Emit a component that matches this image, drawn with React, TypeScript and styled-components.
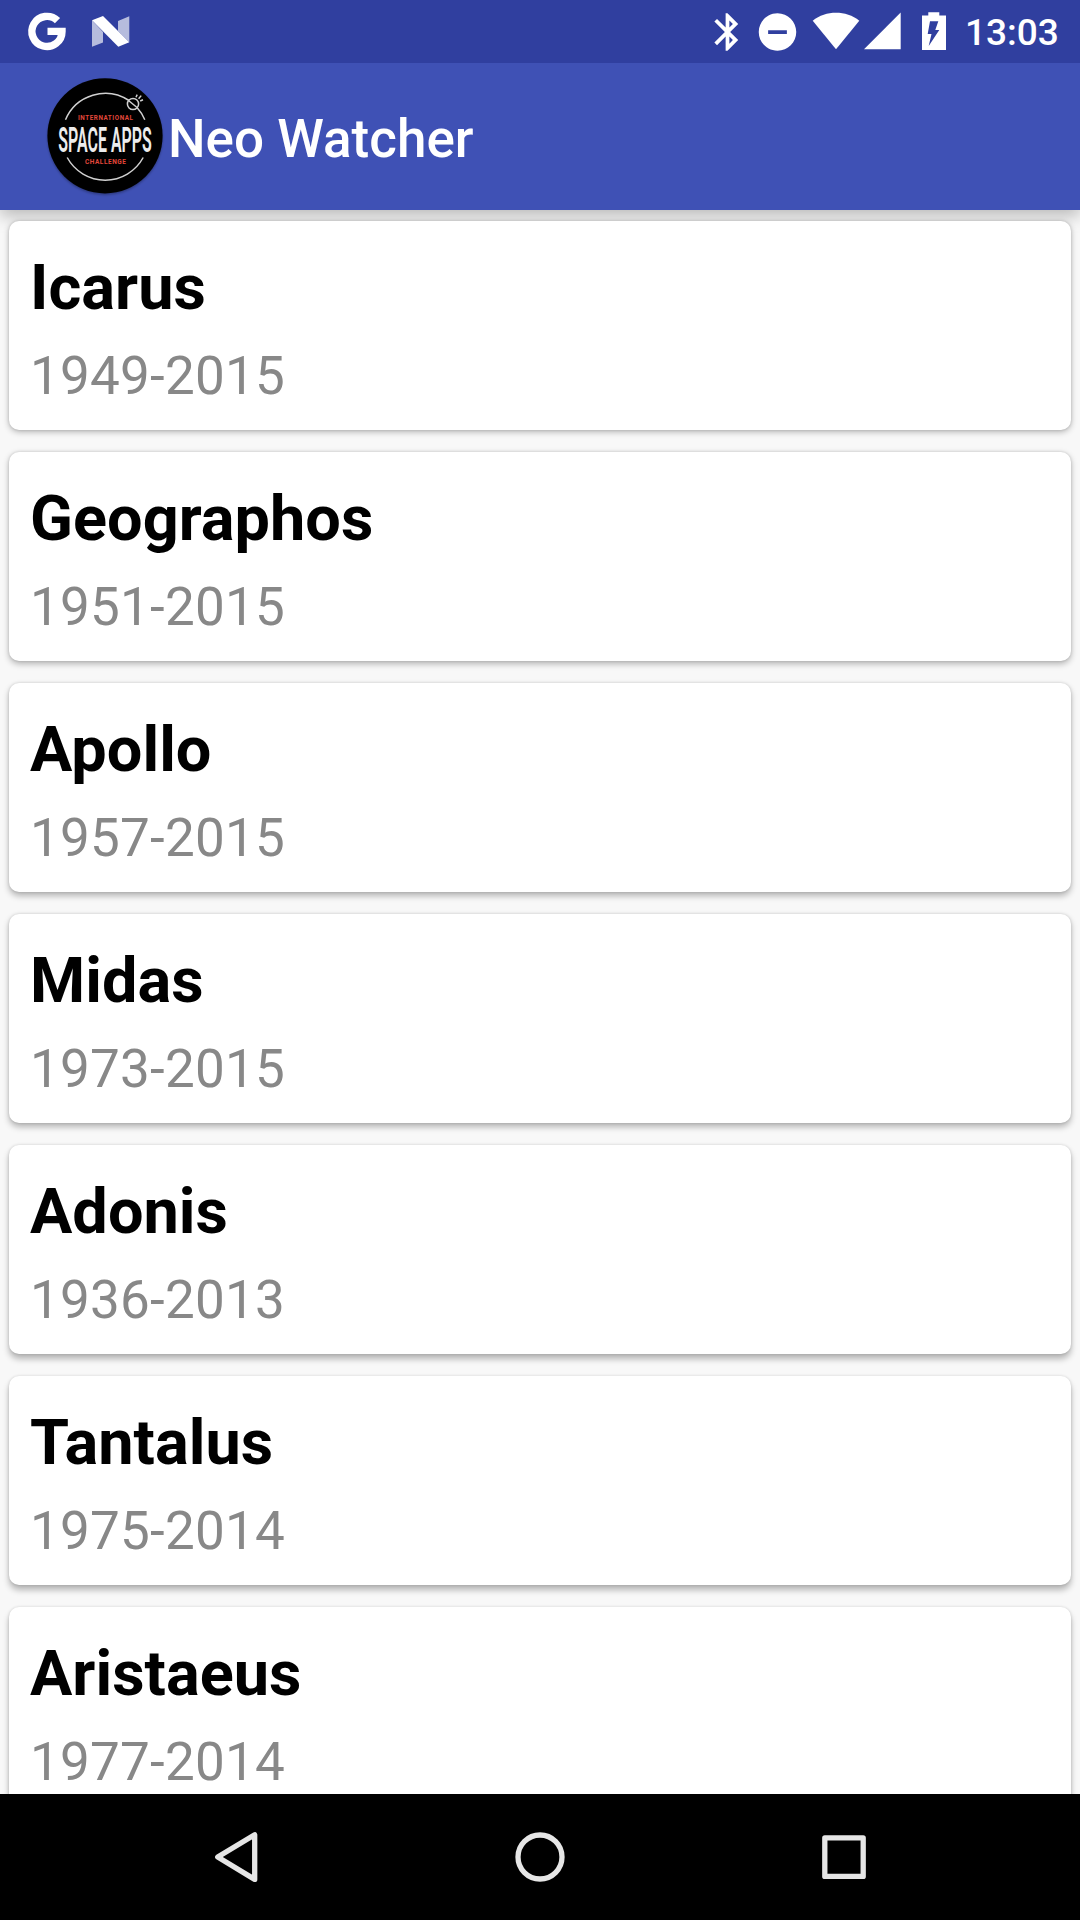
import React from "react";
import styled, { createGlobalStyle } from "styled-components";

const GlobalStyle = createGlobalStyle`
  * { box-sizing: border-box; }
  html, body { margin: 0; padding: 0; }
  body { background: #fafafa; font-family: Roboto, "Noto Sans", sans-serif; }
`;

const Screen = styled.div`
  display: flex;
  flex-direction: column;
  width: 1080px;
  height: 1920px;
  overflow: hidden;
  background: #f8f8f8;
`;

const StatusBar = styled.header`
  display: flex;
  justify-content: space-between;
  flex: none;
  height: 63px;
  padding: 0 22px 0 24px;
  background: #303f9f;
  color: #fff;
  z-index: 2;
`;

const StatusGroup = styled.div`
  display: flex;
  align-items: flex-start;
`;

const StatusIcon = styled.svg<{ $w: number; $gap?: number }>`
  display: block;
  flex: none;
  width: ${(p) => p.$w}px;
  height: 63px;
  margin-left: ${(p) => p.$gap ?? 0}px;
  fill: #fff;
`;

const Clock = styled.time`
  margin-left: 18px;
  width: 93px;
  white-space: nowrap;
  font-size: 37px;
  font-weight: 500;
  line-height: 43px;
  padding-top: 11px;
`;

const AppBar = styled.div`
  display: flex;
  flex: none;
  height: 147px;
  padding: 8px 0 0 42px;
  background: #3f51b5;
  color: #fff;
  box-shadow: 0 6px 16px rgba(0, 0, 0, 0.26);
`;

const Logo = styled.svg`
  display: block;
  flex: none;
  width: 126px;
  height: 130px;
`;

const AppTitle = styled.h1`
  margin: 0;
  padding-top: 37px;
  font-size: 53px;
  font-weight: 500;
  line-height: 62px;
  white-space: nowrap;
`;

const List = styled.main`
  display: flex;
  flex-direction: column;
  gap: 22px;
  flex: 1;
  min-height: 0;
  overflow: hidden;
  padding: 11px 9px 0;
`;

const Card = styled.article<{ $depth: number }>`
  flex: none;
  height: 209px;
  padding: 30px 21px 0;
  border-radius: 10px;
  background: #fff;
  box-shadow: 0 ${(p) => 2 + p.$depth * 0.6}px 6px rgba(0, 0, 0, 0.27),
    0 0 3px rgba(0, 0, 0, 0.14);
`;

const Name = styled.h2`
  margin: 0;
  color: #000;
  font-size: 63px;
  font-weight: 700;
  line-height: 74px;
  letter-spacing: 0.04px;
`;

const Years = styled.p`
  margin: 0;
  padding-top: 20px;
  color: #888;
  font-size: 53px;
  line-height: 62px;
  letter-spacing: 0.24px;
`;

const NavBar = styled.nav`
  display: flex;
  flex: none;
  justify-content: center;
  align-items: center;
  gap: 204px;
  height: 126px;
  background: #000;
  z-index: 1;
`;

const NavButton = styled.button`
  display: flex;
  width: 100px;
  height: 126px;
  padding: 0;
  border: 0;
  background: none;
`;

const NavIcon = styled.svg`
  width: 100px;
  height: 126px;
  fill: none;
  stroke: #e6e6e6;
  stroke-width: 5.3;
  stroke-linejoin: round;
`;

const asteroids = [
  { name: "Icarus", years: "1949-2015" },
  { name: "Geographos", years: "1951-2015" },
  { name: "Apollo", years: "1957-2015" },
  { name: "Midas", years: "1973-2015" },
  { name: "Adonis", years: "1936-2013" },
  { name: "Tantalus", years: "1975-2014" },
  { name: "Aristaeus", years: "1977-2014" },
];

function SpaceAppsLogo() {
  return (
    <Logo viewBox="42 71 126 130">
      <defs>
        <filter id="logoShadow" x="-10%" y="-10%" width="120%" height="125%">
          <feDropShadow dx="0" dy="1.5" stdDeviation="1.2" floodColor="#000" floodOpacity="0.3" />
        </filter>
      </defs>
      <circle cx="105" cy="135.8" r="57.6" fill="#000" filter="url(#logoShadow)" />
      <g fill="none" stroke="#d0d0d0" strokeWidth="1.5">
        <path d="M65.5 119.7A43.2 43.2 0 0 1 129 100.5M137 107.5A43.2 43.2 0 0 1 144.8 119.7" />
        <path d="M67.2 157.5A43.2 43.2 0 0 0 143.2 157.5" />
        <circle cx="133" cy="104" r="5.6" />
        <path d="M128.5 100.5l8.5 7M136 97.2l1.2-2.6M138.6 98.8l2.6-3.2M140.2 101l2.8-1.2" />
      </g>
      <g fontFamily="Roboto, sans-serif" textAnchor="middle">
        <text x="105.4" y="120.3" fill="#e2473a" fontSize="6.3" fontWeight="700" textLength="55" lengthAdjust="spacing">INTERNATIONAL</text>
        <text transform="translate(105 151.5) scale(.45 1)" x="0" y="0" fill="#ececec" fontSize="35.4" fontWeight="600">SPACE APPS</text>
        <text x="105.4" y="164.2" fill="#e2473a" fontSize="6.5" fontWeight="700" textLength="41" lengthAdjust="spacing">CHALLENGE</text>
      </g>
    </Logo>
  );
}

export default function App() {
  return (
    <>
      <GlobalStyle />
      <Screen>
        <StatusBar>
          <StatusGroup>
            <StatusIcon $w={46} viewBox="24 0 46 63">
              <path d="M57.5 20.7A15.05 15.05 0 1 0 62 31.4H47.5" fill="none" stroke="#fff" strokeWidth="7.4" />
            </StatusIcon>
            <StatusIcon $w={46} $gap={17} viewBox="87 0 46 63">
              <path d="M92 20.3L103 32V42.5L92 46.7zM118 21L129.3 16.2V42L118 31z" fillOpacity=".65" />
              <path d="M92 20.3L103 16L129.3 42.3L118.3 46.7z" />
            </StatusIcon>
          </StatusGroup>
          <StatusGroup>
            <StatusIcon $w={45} viewBox="0 -5.1 24 33.6">
              <path d="M17.71 7.71L12 2h-1v7.59L6.41 5 5 6.41 10.59 12 5 17.59 6.41 19 11 14.41V22h1l5.71-5.71-4.3-4.29 4.3-4.29zM13 5.83l1.88 1.88L13 9.59V5.83zm1.88 10.46L13 18.17v-3.76l1.88 1.88z" />
            </StatusIcon>
            <StatusIcon $w={45} $gap={5} viewBox="0 -5.1 24 33.6">
              <path d="M12 2C6.48 2 2 6.48 2 12s4.48 10 10 10 10-4.48 10-10S17.52 2 12 2zm5 11H7v-2h10v2z" />
            </StatusIcon>
            <StatusIcon $w={49} $gap={11} viewBox="811 0 49 63">
              <path d="M812.7 20.7C826 10.2 846 10.2 859.3 20.7L836 49.2z" />
            </StatusIcon>
            <StatusIcon $w={40} $gap={3} viewBox="863 0 40 63">
              <path d="M864 49.3L900.7 12.5V49.3z" />
            </StatusIcon>
            <StatusIcon $w={26} $gap={18} viewBox="921 0 26 63">
              <path fillRule="evenodd" d="M928.3 12.2H939.3V15.5H946V50H922V15.5H928.3zM930 21.3L927.7 34H931.5L928.7 46L939.3 30H935.3L938.3 21.3z" />
            </StatusIcon>
            <Clock>13:03</Clock>
          </StatusGroup>
        </StatusBar>
        <AppBar>
          <SpaceAppsLogo />
          <AppTitle>Neo Watcher</AppTitle>
        </AppBar>
        <List>
          {asteroids.map((a, i) => (
            <Card key={a.name} $depth={i}>
              <Name>{a.name}</Name>
              <Years>{a.years}</Years>
            </Card>
          ))}
        </List>
        <NavBar>
          <NavButton aria-label="Back">
            <NavIcon viewBox="186 1794 100 126">
              <path d="M254.7 1834.8V1879.4L217.7 1857.1z" />
            </NavIcon>
          </NavButton>
          <NavButton aria-label="Home">
            <NavIcon viewBox="490 1794 100 126">
              <circle cx="540" cy="1857" r="22" />
            </NavIcon>
          </NavButton>
          <NavButton aria-label="Recent apps">
            <NavIcon viewBox="794 1794 100 126">
              <rect x="824.8" y="1837.8" width="38.4" height="38.6" />
            </NavIcon>
          </NavButton>
        </NavBar>
      </Screen>
    </>
  );
}
